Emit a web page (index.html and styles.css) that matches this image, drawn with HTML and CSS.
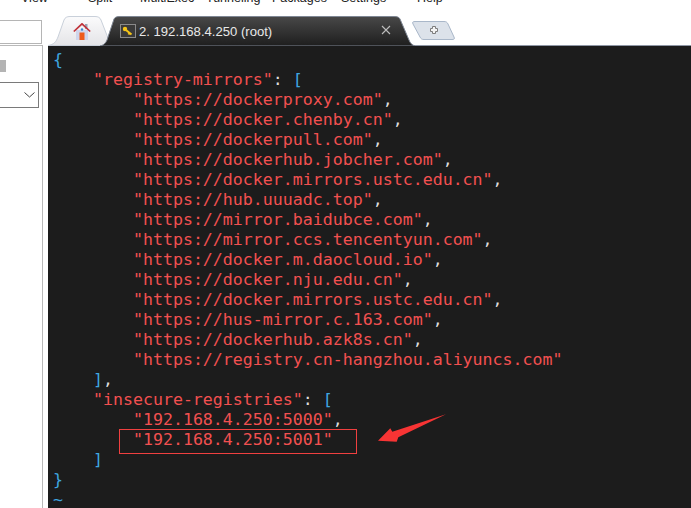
FILE: index.html
```html
<!DOCTYPE html>
<html lang="en">
<head>
<meta charset="utf-8">
<title>MobaXterm</title>
<link rel="stylesheet" href="styles.css">
</head>
<body>
<div class="menubar">
  <span class="m m-view">View</span>
  <span class="m m-split">Split</span>
  <span class="m m-multi">MultiExec</span>
  <span class="m m-tunnel">Tunneling</span>
  <span class="m m-pack">Packages</span>
  <span class="m m-set">Settings</span>
  <span class="m m-help">Help</span>
</div>
<div class="tabrow">
  <div class="side-top"></div>
  <div class="tabs">
    <svg class="tabs-bg" width="643" height="30" viewBox="0 0 643 30">
      <defs>
        <linearGradient id="dark" x1="0" y1="0" x2="0" y2="1"><stop offset="0" stop-color="#484848"/><stop offset="1" stop-color="#1e1e1e"/></linearGradient>
        <linearGradient id="light" x1="0" y1="0" x2="0" y2="1"><stop offset="0" stop-color="#fbfbfc"/><stop offset="1" stop-color="#e4e4e7"/></linearGradient>
      </defs>
      <path d="M360 29.5H643" stroke="#8f97a5" fill="none"/>
      <path d="M0 29.5C6 28.5 8 26 10 21L16 4C17 1.5 19 0.5 22 0.5H47C50 0.5 52 1.5 53 4L60 22L60 29.5Z" fill="url(#light)" stroke="#c9d0da"/>
      <path d="M52 30C57 29 59 25 60 21L66 3C67 1 69 0.5 72 0.5H346C349 0.5 351 1 352 3L361 24C362 27 364 29 367 30Z" fill="url(#dark)" stroke="#7f8794"/>
      <path d="M367 5.5H396C398 5.5 399 6 400 8L406 21C407 23 406 23.5 404 23.5H376C374 23.5 373 23 372 21L365 8C364 6 365 5.5 367 5.5Z" fill="#dce2ea" stroke="#a9b7c9"/>
      <path d="M384.5 10.5H387.5V12.5H389.5V15.5H387.5V17.5H384.5V15.5H382.5V12.5H384.5Z" fill="#f4f4f4" stroke="#7c7c7c"/>
      <path d="M334 10L342 18M342 10L334 18" stroke="#bdbdbd" stroke-width="1.1" fill="none"/>
    </svg>
    <svg class="home" width="18" height="17" viewBox="0 0 18 17">
      <rect x="12" y="1" width="2.5" height="5" fill="#9aa3b5"/>
      <rect x="3" y="7" width="12" height="10" fill="#cfd5ec"/>
      <rect x="6.5" y="9.5" width="5" height="7.5" fill="#ee5a1b"/>
      <circle cx="9" cy="6.5" r="1.2" fill="#3f86cf"/>
      <path d="M0.8 8.5L9 0.8L17.2 8.5" fill="none" stroke="#c0323a" stroke-width="1.7"/>
    </svg>
    <svg class="key" width="16" height="14" viewBox="0 0 16 14">
      <rect x="0.5" y="0.5" width="15" height="13" fill="#3a3a3a" stroke="#8a8a8a"/>
      <circle cx="5" cy="5" r="2.2" fill="#f5c518"/>
      <path d="M6 6L11.5 10.5M9.5 9L8.5 10.5" stroke="#f5c518" stroke-width="2" fill="none"/>
    </svg>
    <span class="tab-title">2. 192.168.4.250 (root)</span>
  </div>
</div>
<div class="main">
  <aside class="side">
    <div class="chip"></div>
    <div class="select">
      <svg width="11" height="6" viewBox="0 0 11 6"><path d="M0.5 0.5L5.5 5L10.5 0.5" fill="none" stroke="#444"/></svg>
    </div>
  </aside>
  <pre class="term"><span class="b">{</span>
    <span class="r">"registry-mirrors"</span><span class="w">:</span> <span class="b">[</span>
        <span class="r">"https://dockerproxy.com"</span><span class="w">,</span>
        <span class="r">"https://docker.chenby.cn"</span><span class="w">,</span>
        <span class="r">"https://dockerpull.com"</span><span class="w">,</span>
        <span class="r">"https://dockerhub.jobcher.com"</span><span class="w">,</span>
        <span class="r">"https://docker.mirrors.ustc.edu.cn"</span><span class="w">,</span>
        <span class="r">"https://hub.uuuadc.top"</span><span class="w">,</span>
        <span class="r">"https://mirror.baidubce.com"</span><span class="w">,</span>
        <span class="r">"https://mirror.ccs.tencentyun.com"</span><span class="w">,</span>
        <span class="r">"https://docker.m.daocloud.io"</span><span class="w">,</span>
        <span class="r">"https://docker.nju.edu.cn"</span><span class="w">,</span>
        <span class="r">"https://docker.mirrors.ustc.edu.cn"</span><span class="w">,</span>
        <span class="r">"https://hus-mirror.c.163.com"</span><span class="w">,</span>
        <span class="r">"https://dockerhub.azk8s.cn"</span><span class="w">,</span>
        <span class="r">"https://registry.cn-hangzhou.aliyuncs.com"</span>
    <span class="b">]</span><span class="w">,</span>
    <span class="r">"insecure-registries"</span><span class="w">:</span> <span class="b">[</span>
        <span class="r">"192.168.4.250:5000"</span><span class="w">,</span>
        <span class="r">"192.168.4.250:5001"</span>
    <span class="b">]</span>
<span class="b">}</span>
<span class="b">~</span></pre>
  <div class="mark"></div>
  <svg class="arrow" width="70" height="32" viewBox="0 0 70 32"><path d="M68 2.3L20.3 25.3L18.7 29.7L0 28.7L12.3 16.3L14.3 19.7Z" fill="#f73434"/></svg>
</div>
</body>
</html>
```
FILE: styles.css
```css
html, body { margin: 0; padding: 0; }
body {
  width: 691px;
  height: 508px;
  overflow: hidden;
  background: #fff;
  font-family: "Liberation Sans", Arial, sans-serif;
}
.menubar {
  height: 16px;
  position: relative;
  font-size: 12.5px;
  color: #222;
}
.m { position: absolute; top: -10px; line-height: 16px; }
.m-view { left: 21px; }
.m-split { left: 88px; }
.m-multi { left: 140px; }
.m-tunnel { left: 206px; }
.m-pack { left: 272px; }
.m-set { left: 341px; }
.m-help { left: 417px; }
.tabrow { display: flex; height: 30px; }
.side-top {
  width: 42px;
  height: 24px;
  margin-top: 4px;
  box-sizing: border-box;
  border: 1px solid #b5b5b5;
  border-left: 0;
  flex: none;
}
.tabs { position: relative; width: 643px; margin-left: 6px; }
.tabs-bg { position: absolute; left: 0; top: 0; }
.home { position: absolute; left: 25px; top: 7px; }
.key { position: absolute; left: 72px; top: 8px; }
.tab-title {
  position: absolute;
  left: 91px;
  top: 8px;
  font-size: 13.1px;
  line-height: 16px;
  color: #e8e8e8;
  white-space: nowrap;
}
.main { display: flex; height: 462px; position: relative; }
.side {
  width: 43px;
  margin: -1px 5px 0 0;
  box-sizing: border-box;
  border-top: 1px solid #b9b9b9;
  border-right: 1px solid #b9b9b9;
  flex: none;
}
.chip {
  width: 6px;
  height: 12px;
  background: #b4b4b4;
  margin-top: 14px;
}
.select {
  width: 39px;
  height: 26px;
  margin-top: 10px;
  box-sizing: border-box;
  border: 1px solid #7a7a7a;
  border-left: 0;
  display: flex;
  align-items: center;
  justify-content: flex-end;
  padding-right: 3px;
}
.term {
  flex: 1;
  margin: 0;
  padding: 4px 0 0 5px;
  background: #1c1c1c;
  font-family: "DejaVu Sans Mono", monospace;
  font-size: 16.6px;
  line-height: 20px;
  color: #ddd;
  overflow: hidden;
}
.r { color: #f25050; }
.b { color: #3fa7e0; }
.w { color: #ddd; }
.mark {
  position: absolute;
  left: 119px;
  top: 383px;
  width: 238px;
  height: 25px;
  box-sizing: border-box;
  border: 1px solid #f04040;
}
.arrow { position: absolute; left: 378px; top: 366px; }
```
